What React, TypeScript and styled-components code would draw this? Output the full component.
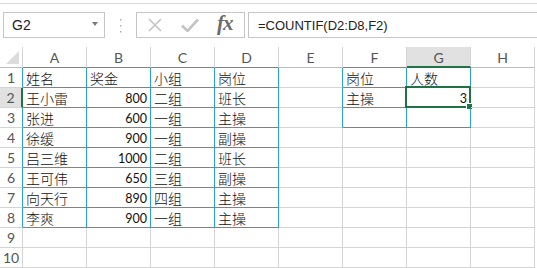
import React from "react";
import styled, { createGlobalStyle } from "styled-components";

const GlobalStyle = createGlobalStyle`
  html, body { margin: 0; padding: 0; background: #fff; overflow: hidden; }
  body { font-family: "Liberation Sans", Arial, sans-serif; }
`;

const GRID = "#d4d4d4";
const BLUE = "#2aa0cf";
const GREEN = "#217346";

const Page = styled.div`
  width: 537px;
  height: 268px;
  padding-top: 3px;
  box-sizing: border-box;
  overflow: hidden;
`;

const Toolbar = styled.div`
  border-top: 1px solid #dcdcdc;
  padding: 8px 0 0 3px;
  display: flex;
  align-items: stretch;
  height: 26px;
`;

const NameBox = styled.div`
  width: 102px;
  box-sizing: border-box;
  border: 1px solid #c6c6c6;
  display: flex;
  align-items: center;
  justify-content: space-between;
  padding: 0 6px 0 8px;
  font-size: 14px;
  color: #222;
`;

const DropArrow = styled.span`
  width: 0;
  height: 0;
  border-left: 3px solid transparent;
  border-right: 3px solid transparent;
  border-top: 4px solid #7a7a7a;
  margin-top: -2px;
`;

const Grip = styled.div`
  width: 31px;
  display: flex;
  justify-content: center;
  align-items: center;
`;

const FxBox = styled.div`
  width: 109px;
  box-sizing: border-box;
  border: 1px solid #c6c6c6;
  display: flex;
  align-items: center;
  padding-left: 10px;
`;

const IconSlot = styled.span<{ $w: number; $ml?: number }>`
  display: inline-flex;
  width: ${(p) => p.$w}px;
  margin-left: ${(p) => p.$ml ?? 0}px;
  justify-content: center;
`;

const FxText = styled.span`
  font-family: "Liberation Serif", "Times New Roman", serif;
  font-style: italic;
  font-weight: bold;
  font-size: 21px;
  color: #6b6b6b;
  margin-left: 18px;
  margin-top: -3px;
  letter-spacing: -1px;
`;

const FormulaInput = styled.div`
  flex: 1;
  margin-left: 3px;
  border: 1px solid #c6c6c6;
  border-right: none;
  display: flex;
  align-items: center;
  padding-left: 9px;
  font-size: 13px;
  color: #222;
`;

const Sheet = styled.div`
  margin-top: 9px;
  display: grid;
  grid-template-columns: 23px repeat(8, 64px);
  grid-template-rows: 21px repeat(10, 20px);
`;

const Corner = styled.div`
  box-sizing: border-box;
  border-right: 1px solid ${GRID};
  border-bottom: 1px solid #bdbdbd;
  position: relative;
`;

const CornerTri = styled.span`
  position: absolute;
  right: 3px;
  bottom: 3px;
  width: 0;
  height: 0;
  border-left: 13px solid transparent;
  border-bottom: 13px solid #dcdcdc;
`;

const ColHead = styled.div<{ $sel?: boolean; $bottom: string }>`
  box-sizing: border-box;
  border-right: 1px solid ${GRID};
  border-bottom: ${(p) => (p.$sel ? `2px solid ${GREEN}` : `1px solid ${p.$bottom}`)};
  background: ${(p) => (p.$sel ? "#e1e1e1" : "#fff")};
  color: #555;
  font-family: Lato, "Liberation Sans", sans-serif;
  font-size: 14px;
  display: flex;
  align-items: center;
  justify-content: center;
  padding-top: 1px;
`;

const RowHead = styled.div<{ $sel?: boolean; $right: string; $bottom: string }>`
  box-sizing: border-box;
  border-right: ${(p) => (p.$sel ? `2px solid ${GREEN}` : `1px solid ${p.$right}`)};
  border-bottom: 1px solid ${(p) => p.$bottom};
  background: ${(p) => (p.$sel ? "#e1e1e1" : "#fff")};
  color: #555;
  font-family: Lato, "Liberation Sans", sans-serif;
  font-size: 14px;
  display: flex;
  align-items: center;
  justify-content: center;
`;

const Cell = styled.div<{ $right: string; $bottom: string; $num?: boolean }>`
  box-sizing: border-box;
  position: relative;
  border-right: 1px solid ${(p) => p.$right};
  border-bottom: 1px solid ${(p) => p.$bottom};
  display: flex;
  align-items: center;
  justify-content: ${(p) => (p.$num ? "flex-end" : "flex-start")};
  padding: ${(p) => (p.$num ? "1px 3px 0 0" : "0 0 0 3px")};
  font-family: ${(p) =>
    p.$num
      ? `Lato, "Liberation Sans", sans-serif`
      : `"Noto Sans CJK SC", "Liberation Sans", sans-serif`};
  font-size: ${(p) => (p.$num ? "12.5px" : "14px")};
  font-weight: ${(p) => (p.$num ? 400 : 300)};
  color: #111;
  white-space: nowrap;
`;

const Selection = styled.div`
  position: absolute;
  left: -2px;
  top: -2px;
  right: -1px;
  bottom: -1px;
  border: 2px solid ${GREEN};
  pointer-events: none;
`;

const FillHandle = styled.span`
  position: absolute;
  right: -4px;
  bottom: -4px;
  width: 5px;
  height: 5px;
  background: ${GREEN};
  border: 1px solid #fff;
`;

type V = string | number;
const data: V[][] = [
  ["姓名", "奖金", "小组", "岗位", "", "岗位", "人数", ""],
  ["王小雷", 800, "二组", "班长", "", "主操", 3, ""],
  ["张进", 600, "一组", "主操", "", "", "", ""],
  ["徐缓", 900, "一组", "副操", "", "", "", ""],
  ["吕三维", 1000, "二组", "班长", "", "", "", ""],
  ["王可伟", 650, "三组", "副操", "", "", "", ""],
  ["向天行", 890, "四组", "主操", "", "", "", ""],
  ["李爽", 900, "一组", "主操", "", "", "", ""],
  ["", "", "", "", "", "", "", ""],
  ["", "", "", "", "", "", "", ""],
];

const cols = ["A", "B", "C", "D", "E", "F", "G", "H"];

const isBlue = (r: number, c: number) =>
  (r >= 0 && r <= 7 && c >= 0 && c <= 3) || (r >= 0 && r <= 2 && c >= 5 && c <= 6);

const SEL_R = 1;
const SEL_C = 6;

export default function App() {
  return (
    <Page>
      <GlobalStyle />
      <Toolbar>
        <NameBox>
          <span>G2</span>
          <DropArrow />
        </NameBox>
        <Grip>
          <svg width="3" height="15" viewBox="0 0 3 15">
            <rect x="1" y="1" width="1.5" height="1.5" fill="#b0b0b0" />
            <rect x="1" y="7" width="1.5" height="1.5" fill="#b0b0b0" />
            <rect x="1" y="13" width="1.5" height="1.5" fill="#b0b0b0" />
          </svg>
        </Grip>
        <FxBox>
          <IconSlot $w={15}>
            <svg width="14" height="14" viewBox="0 0 14 14">
              <path d="M1 1 L13 13 M13 1 L1 13" stroke="#c4c4c4" strokeWidth="1.6" />
            </svg>
          </IconSlot>
          <IconSlot $w={18} $ml={19}>
            <svg width="18" height="14" viewBox="0 0 18 14">
              <path d="M1 7.5 L6.5 13 L17 1.5" stroke="#c4c4c4" strokeWidth="2.6" fill="none" />
            </svg>
          </IconSlot>
          <FxText>fx</FxText>
        </FxBox>
        <FormulaInput>=COUNTIF(D2:D8,F2)</FormulaInput>
      </Toolbar>
      <Sheet>
        <Corner>
          <CornerTri />
        </Corner>
        {cols.map((c, ci) => (
          <ColHead key={c} $sel={ci === SEL_C} $bottom={isBlue(0, ci) ? BLUE : "#bdbdbd"}>
            {c}
          </ColHead>
        ))}
        {data.map((row, ri) => (
          <React.Fragment key={ri}>
            <RowHead
              $sel={ri === SEL_R}
              $right={isBlue(ri, 0) ? BLUE : GRID}
              $bottom={GRID}
            >
              {ri + 1}
            </RowHead>
            {row.map((v, ci) => {
              const right = isBlue(ri, ci) || isBlue(ri, ci + 1) ? BLUE : GRID;
              const bottom = isBlue(ri, ci) || isBlue(ri + 1, ci) ? BLUE : GRID;
              const sel = ri === SEL_R && ci === SEL_C;
              return (
                <Cell key={ci} $right={right} $bottom={bottom} $num={typeof v === "number"}>
                  {v}
                  {sel && (
                    <Selection>
                      <FillHandle />
                    </Selection>
                  )}
                </Cell>
              );
            })}
          </React.Fragment>
        ))}
      </Sheet>
    </Page>
  );
}
